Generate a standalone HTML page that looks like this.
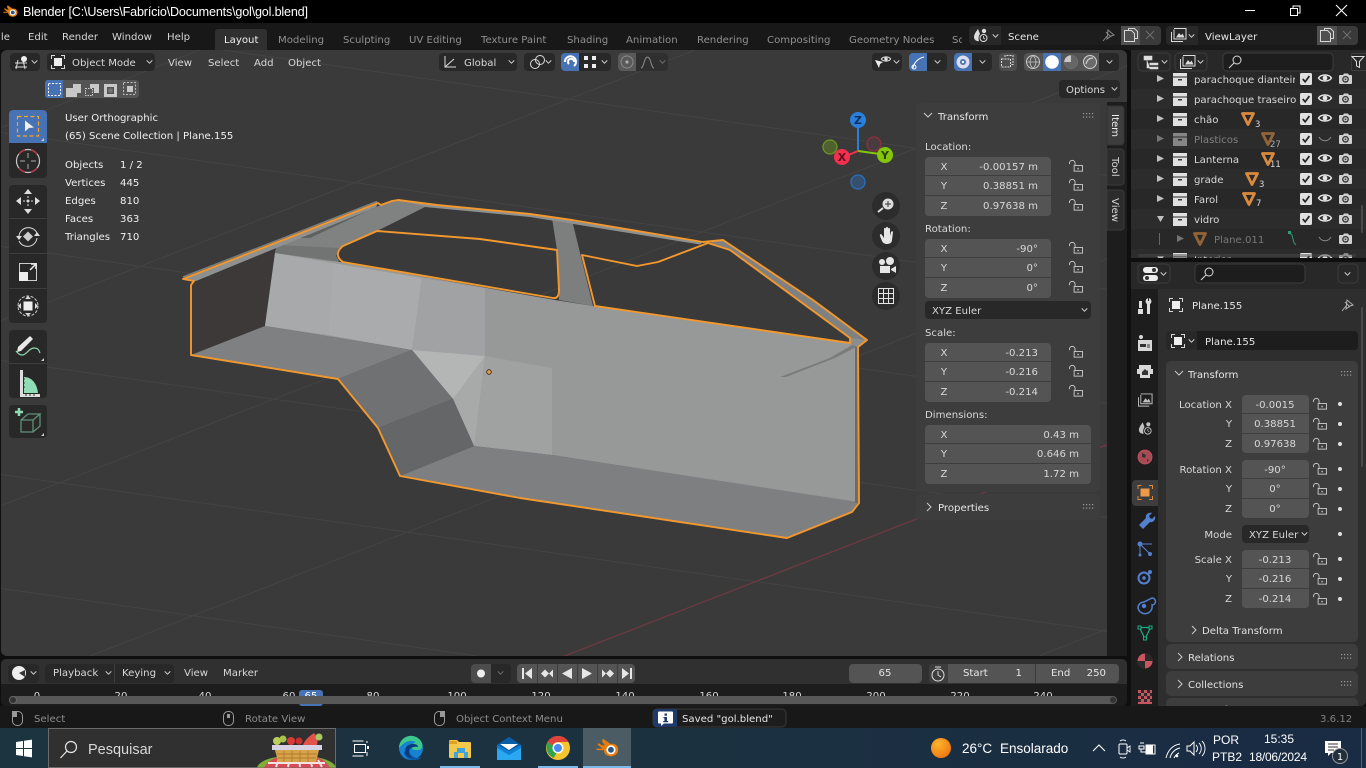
<!DOCTYPE html>
<html><head><meta charset="utf-8"><title>Blender</title>
<style>
html,body{margin:0;padding:0;background:#000;width:1366px;height:768px;overflow:hidden}
svg{display:block;overflow:hidden}
text{font-family:"DejaVu Sans","Liberation Sans",sans-serif;font-size:10.15px;fill:#d8d8d8;white-space:pre}
.w text,text.w{font-family:"Liberation Sans",sans-serif}
.r{text-anchor:end}.c{text-anchor:middle}
.dim{fill:#9a9a9a}.fld{fill:#545454}.drk{fill:#282828}
</style></head><body>
<svg width="1366" height="768" viewBox="0 0 1366 768" xmlns="http://www.w3.org/2000/svg">
<defs>
<symbol id="lock" viewBox="0 0 15 12" overflow="visible"><g fill="none" stroke="#c8c8c8" stroke-width="1"><rect x="5.5" y="5.5" width="9" height="6"/><path d="M.5 4V3a3 3 0 0 1 6 0v2.500"/></g><rect x="9" y="8" width="1.5" height="1.5" fill="#c8c8c8"/></symbol>
<symbol id="chev" viewBox="0 0 8 5" overflow="visible"><path d="M.5.5L4 4 7.5.5" fill="none" stroke="#d0d0d0" stroke-width="1.2"/></symbol>
<symbol id="eye" viewBox="0 0 14 10" overflow="visible"><path d="M.5 5C3 1 11 1 13.5 5 11 9 3 9 .5 5Z" fill="none" stroke="#e4e4e4" stroke-width="1.5"/><circle cx="7" cy="5" r="2.4" fill="#e4e4e4"/></symbol>
<symbol id="cam" viewBox="0 0 13 12" overflow="visible"><path d="M1 2h3l1-1.5h4L10 2h2a1 1 0 0 1 1 1v7a1 1 0 0 1-1 1H1a1 1 0 0 1-1-1V3a1 1 0 0 1 1-1Z" fill="#d0d0d0"/><circle cx="6.5" cy="6.3" r="3.4" fill="#3c3c3c"/><circle cx="6.5" cy="6.3" r="2" fill="#c8c8c8"/><circle cx="6.5" cy="6.3" r=".9" fill="#444"/></symbol>
<symbol id="chk" viewBox="0 0 11 11" overflow="visible"><rect width="11" height="11" rx="1.5" fill="#e0e0e0"/><path d="M2.5 5.5L4.7 8 8.6 2.8" fill="none" stroke="#282828" stroke-width="1.6"/></symbol>
<symbol id="col" viewBox="0 0 14 13" overflow="visible"><rect width="14" height="3.5" fill="#e0e0e0"/><rect y="4.5" width="14" height="8.5" fill="#e0e0e0"/><rect x="5" y="6" width="4" height="1.5" fill="#333"/></symbol>
<symbol id="tri" viewBox="0 0 7 7" overflow="visible"><path d="M0 0L7 3.5 0 7Z" fill="#c0c0c0"/></symbol>
<symbol id="ot" viewBox="0 0 14 14" overflow="visible"><path d="M1.5 1.5H12.5L7 12.5Z" fill="none" stroke="#d98a3f" stroke-width="2.8" stroke-linejoin="round"/></symbol>
<symbol id="objic" viewBox="0 0 14 14" overflow="visible"><g fill="none" stroke="#d8d8d8" stroke-width="1"><path d="M.5 4V.5H4M10 .5H13.5V4M13.5 10V13.5H10M4 13.5H.5V10"/></g><rect x="3" y="3" width="8" height="8" fill="#eee"/></symbol>
<symbol id="dots" viewBox="0 0 11 6" overflow="visible"><g fill="#9a9a9a"><rect width="1.2" height="1.2"/><rect x="3" width="1.2" height="1.2"/><rect x="6" width="1.2" height="1.2"/><rect x="9" width="1.2" height="1.2"/><rect y="3.5" width="1.2" height="1.2"/><rect x="3" y="3.5" width="1.2" height="1.2"/><rect x="6" y="3.5" width="1.2" height="1.2"/><rect x="9" y="3.5" width="1.2" height="1.2"/></g></symbol>
<symbol id="mouse" viewBox="0 0 11 15" overflow="visible"><rect x=".5" y=".5" width="10" height="14" rx="4.5" fill="none" stroke="#9a9a9a"/></symbol>
<symbol id="copy" viewBox="0 0 14 14" overflow="visible"><path d="M4.5 2.5V.5h6l3 3v7h-3M.5 2.5h7l3 3v8H.5Z" fill="none" stroke="#d8d8d8"/></symbol>
<symbol id="vl" viewBox="0 0 16 14" overflow="visible"><path d="M.5 4v9.5H12M3 1.5v9.5h12V.5H3" fill="none" stroke="#ddd"/><path d="M5 9.5L8 5l2 2.5 1.5-2 2 4Z" fill="#ddd"/></symbol>
<symbol id="scn" viewBox="0 0 16 14" overflow="visible"><path d="M5 1C2 5 1 7 1 9a4 4 0 0 0 5 4C5 10 6 7 7 6Z" fill="#ddd"/><circle cx="11" cy="3" r="2.2" fill="#ddd"/><circle cx="10.5" cy="10" r="3.5" fill="none" stroke="#ddd"/><path d="M10.5 8v2l1.5 1" fill="none" stroke="#ddd" stroke-width=".8"/></symbol>
<symbol id="blogo" viewBox="0 0 30 24" overflow="visible"><path d="M10 1l9 6.5c5-1.500 10 2 10 7.500 0 5-4.500 8.500-9.500 8.500S10 20 10.500 15.500L1 15.500c-1-.8-.8-2 .5-2h7l-6-5c-1-1.200.5-2.500 1.800-1.500l3.500 2.300 3.700-.3-3-3.800C7.500 2.500 8.500.500 10 1Z" fill="#e87d0d"/><circle cx="19.500" cy="15" r="6" fill="#fff"/><circle cx="19.500" cy="15" r="3.800" fill="#265787"/></symbol>
<clipPath id="vpc"><rect x="1" y="50" width="1126" height="606" rx="6"/></clipPath>
<clipPath id="olc"><rect x="1131" y="72" width="235" height="186"/></clipPath>
<clipPath id="tab"><rect x="0" y="26" width="962" height="24"/></clipPath>
<clipPath id="rulc"><rect x="0" y="684" width="1127" height="22"/></clipPath>
<clipPath id="prc"><rect x="1131" y="262" width="235" height="444"/></clipPath>
<clipPath id="olnm"><rect x="1131" y="72" width="164" height="186"/></clipPath>
<linearGradient id="tb" x1="0" x2="1" y1="0" y2="0"><stop offset="0" stop-color="#1c3340"/><stop offset=".5" stop-color="#1b3140"/><stop offset="1" stop-color="#1a2b44"/></linearGradient>
<radialGradient id="sun" cx=".35" cy=".3" r=".9"><stop offset="0" stop-color="#fbb52c"/><stop offset="1" stop-color="#ec6a0c"/></radialGradient>
</defs>

<rect width="1366" height="768" fill="#0f0f0f"/>
<!-- title bar -->
<rect width="1366" height="23" fill="#000"/>
<use href="#blogo" x="3" y="5" width="15" height="12"/>
<text class="w" x="23" y="16" style="font-size:12.6px;fill:#fff" textLength="285">Blender [C:\Users\Fabrício\Documents\gol\gol.blend]</text>
<path d="M1245 10.500h10" stroke="#fff"/>
<path d="M1290.500 8.500h7v7h-7ZM1293 8.500V6h7v7h-2.500" fill="none" stroke="#fff"/>
<path d="M1336 5l11 11M1347 5l-11 11" stroke="#fff" stroke-width="1.100"/>

<!-- top bar -->
<rect y="23" width="1366" height="27" fill="#181818"/>
<g style="fill:#d0d0d0">
<text x="-7" y="40">File</text><text x="28" y="40">Edit</text><text x="62" y="40">Render</text><text x="112" y="40">Window</text><text x="167" y="40">Help</text>
</g>
<path d="M215 50V32a3 3 0 0 1 3-3h46a3 3 0 0 1 3 3v18Z" fill="#303030"/>
<g clip-path="url(#tab)">
<text x="224" y="43" fill="#fff" style="fill:#f0f0f0">Layout</text>
<g style="opacity:.62"><text x="278" y="43">Modeling</text><text x="343" y="43">Sculpting</text><text x="409" y="43">UV Editing</text><text x="481" y="43">Texture Paint</text><text x="567" y="43">Shading</text><text x="626" y="43">Animation</text><text x="697" y="43">Rendering</text><text x="767" y="43">Compositing</text><text x="849" y="43">Geometry Nodes</text><text x="952" y="43">Scripting</text></g>
</g>
<!-- scene -->
<rect x="969" y="26" width="192" height="19" rx="4" fill="#282828"/>
<rect x="1001" y="26" width="120" height="19" fill="#1d1d1d"/>
<path d="M1121 26h19v19h-19Z" fill="#505050"/><path d="M1140 26h17a4 4 0 0 1 4 4v11a4 4 0 0 1-4 4h-17Z" fill="#3a3a3a"/>
<use href="#scn" x="973" y="28" width="16" height="14"/><use href="#chev" x="992" y="34" width="7" height="4"/>
<text x="1008" y="40" style="fill:#e6e6e6">Scene</text>
<path d="M1103 41l4-5m-1-4l5 5m-3-7l6 5-3 1-4 3Z" fill="none" stroke="#888"/>
<use href="#copy" x="1124" y="28" width="14" height="14"/><path d="M1146 31l8 8m0-8l-8 8" stroke="#6f6f6f"/>
<rect x="1166" y="26" width="192" height="19" rx="4" fill="#282828"/>
<rect x="1198" y="26" width="119" height="19" fill="#1d1d1d"/>
<path d="M1317 26h20v19h-20Z" fill="#505050"/><path d="M1337 26h17a4 4 0 0 1 4 4v11a4 4 0 0 1-4 4h-17Z" fill="#3a3a3a"/>
<use href="#vl" x="1171" y="28" width="16" height="14"/><use href="#chev" x="1188" y="34" width="7" height="4"/>
<text x="1205" y="40" style="fill:#e6e6e6">ViewLayer</text>
<use href="#copy" x="1320" y="28" width="14" height="14"/><path d="M1343 31l8 8m0-8l-8 8" stroke="#6f6f6f"/>

<!-- viewport -->
<g clip-path="url(#vpc)">
<rect x="1" y="50" width="1126" height="606" fill="#3a3a3a"/>
<g stroke="#444" stroke-width="1" fill="none">
<path d="M223 50L1127 178.300M0 132.300L1127 292.300M0 246.300L1127 406.300M0 360.300L1127 520.300M0 474.300L1127 634.300M0 588.300L477 656"/>
<path d="M0 128L200 50M0 321L695 50M0 506L1127 66M90 656L1127 251M1039 656L1127 621"/>
</g>
<path d="M562 657L1127 437" stroke="#6c3a42" fill="none" stroke-width="1.300"/>

<!-- mesh faces -->
<path d="M191 285L275 248 265 326 191 355Z" fill="#3d3938"/>
<path d="M552 218L572 220 593 306 559 300 559 293 557 250Z" fill="#7d7f7f"/>
<path d="M381 205L398 200 425 207 377 231 340 248 336 256 339 261 275 252 277 245 300 236Z" fill="#808282"/>
<path d="M277 245L340 248 336 256 339 262 275 253Z" fill="#727474"/>
<path d="M300 238L372 209 378 206 310 238Z" fill="#5f6161"/>
<path d="M183 277L377 201.500" stroke="#7c7e7e" stroke-width="1.500" fill="none"/>
<path d="M183 279L378 203 376 207 196 281Z" fill="#8f9090"/>
<path d="M398 200L437 205 530 214 703 242 700 244.500 530 217 425 207Z" fill="#8e9090"/>
<path d="M708 243L723 240 813 300 867 340 858 347 850 338 730 250Z" fill="#7f8181"/>
<path d="M275 253L340 262 555 300 593 306 850 343 858 347 858 503 552 455 474 446 453 399 412 350 265 326Z" fill="#979998"/>
<path d="M275 253L333 263 328 335 265 326Z" fill="#a7a9aa"/>
<path d="M333 263L422 278 412 350 328 335Z" fill="#a9abac"/>
<path d="M422 278L485 288 485 356 412 350Z" fill="#a0a2a3"/>
<path d="M485 356L552 368 552 455 474 446 477 423Z" fill="#a0a2a2"/>
<path d="M485 356L453 399 474 446 477 423Z" fill="#a8aaaa"/>
<path d="M412 350L485 356 453 399Z" fill="#b4b6b6"/>
<path d="M191 355L265 326 412 350 338 379Z" fill="#7f8081"/>
<path d="M338 379L412 350 453 399 378 428Z" fill="#707173"/>
<path d="M378 428L453 399 474 446 400 476Z" fill="#656668"/>
<path d="M400 476L474 446 552 455 858 502 852 512 787 538 520 498Z" fill="#7e7f81"/>
<path d="M780 377L830 358 852 345 858 346 835 358 786 377Z" fill="#7a7c7c"/>
<path d="M855 347H858V503H855Z" fill="#6a6c6c"/>
<path d="M850 338L867 340 858 347 850 344Z" fill="#8c8e8e"/>
<!-- outlines -->
<g fill="none" stroke="#f2982e" stroke-width="1.900" stroke-linejoin="round">
<path d="M183 279L378 203 381 205 392 201 398 200 437 205 530 214 572 220 703 242 723 240 813 300 867 340 858 347 859 503 852 512 787 538 520 498 400 476 378 428 338 379 191 355 191 285 194 281Z"/>
<path d="M377 231L480 239 557 250 559 290Q559 299 553 298L343 262Q337 258 338 253 339 249 343 246Z"/>
<path d="M582 255L637 266 658 262 708 243 730 250 850 338 850 343 595 306Z"/>
</g>
<circle cx="489" cy="372" r="2.300" fill="#f0993a" stroke="#222" stroke-width=".8"/>
</g>

<!-- header -->
<rect x="10" y="53" width="30" height="18" rx="4" fill="#282828"/>
<g fill="none" stroke="#ddd"><path d="M15 63h12M15 67h12M18 60l-2 9M23 60l2 9"/></g><circle cx="24" cy="59" r="3" fill="#eee"/>
<use href="#chev" x="31" y="60" width="7" height="4"/>
<rect x="47" y="53" width="108" height="18" rx="4" fill="#282828"/>
<use href="#objic" x="51" y="55" width="14" height="14"/>
<text x="72" y="66">Object Mode</text><use href="#chev" x="146" y="60" width="7" height="4"/>
<text x="168" y="66">View</text><text x="208" y="66">Select</text><text x="254" y="66">Add</text><text x="288" y="66">Object</text>
<rect x="439" y="53" width="78" height="18" rx="4" fill="#282828"/>
<path d="M445 56v11h11M445 67l9-8" fill="none" stroke="#ddd"/>
<text x="464" y="66">Global</text><use href="#chev" x="508" y="60" width="7" height="4"/>
<rect x="524" y="53" width="31" height="18" rx="4" fill="#282828"/>
<circle cx="535" cy="64" r="4.500" fill="none" stroke="#ddd"/><circle cx="540" cy="60" r="4.500" fill="none" stroke="#ddd"/>
<use href="#chev" x="545" y="60" width="7" height="4"/>
<rect x="561" y="53" width="50" height="18" rx="4" fill="#282828"/>
<path d="M565 53h14v18h-14a4 4 0 0 1-4-4V57a4 4 0 0 1 4-4Z" fill="#4772b3"/>
<path d="M565 62a5.500 5.500 0 1 1 9 4M574 62a3 3 0 1 0-5 2" fill="none" stroke="#fff" stroke-width="2"/>
<g fill="#eee"><rect x="584" y="56" width="4" height="4"/><rect x="592" y="56" width="4" height="4"/><rect x="584" y="64" width="4" height="4"/><rect x="592" y="64" width="4" height="4"/></g>
<use href="#chev" x="601" y="60" width="7" height="4"/>
<rect x="618" y="53" width="50" height="18" rx="4" fill="#2f2f2f"/>
<path d="M622 53h14v18h-14a4 4 0 0 1-4-4V57a4 4 0 0 1 4-4Z" fill="#595959"/>
<circle cx="627" cy="62" r="6" fill="none" stroke="#8a8a8a"/><circle cx="627" cy="62" r="1.600" fill="#aaa"/>
<path d="M641 68c3 0 3-11 6.500-11s3.500 11 6.500 11" fill="none" stroke="#8a8a8a"/>
<use href="#chev" x="659" y="60" width="7" height="4" opacity=".4"/>
<rect x="872" y="53" width="30" height="18" rx="4" fill="#282828"/>
<use href="#eye" x="881" y="55" width="10" height="8"/><path d="M875 60l8 2-3 2-1 4Z" fill="#eee"/><use href="#chev" x="893" y="60" width="7" height="4"/>
<rect x="909" y="53" width="38" height="18" rx="4" fill="#282828"/>
<path d="M913 53h14v18h-14a4 4 0 0 1-4-4V57a4 4 0 0 1 4-4Z" fill="#4772b3"/>
<path d="M913 68c1-6 6-10 11-11" fill="none" stroke="#fff"/><circle cx="914" cy="67" r="2" fill="none" stroke="#fff"/>
<use href="#chev" x="934" y="60" width="7" height="4"/>
<rect x="954" y="53" width="38" height="18" rx="4" fill="#282828"/>
<path d="M958 53h14v18h-14a4 4 0 0 1-4-4V57a4 4 0 0 1 4-4Z" fill="#4772b3"/>
<circle cx="963" cy="62" r="6.500" fill="#dde" /><circle cx="963" cy="62" r="3" fill="#4772b3"/><circle cx="963" cy="62" r="1.200" fill="#fff"/>
<use href="#chev" x="979" y="60" width="7" height="4"/>
<rect x="999" y="53" width="18" height="18" rx="4" fill="#4d4d4d"/>
<path d="M1005 57v-1.500h8v9h-2M1001.500 59h9v8h-9Z" fill="none" stroke="#ddd" stroke-dasharray="2 1"/>
<rect x="1024" y="53" width="95" height="18" rx="4" fill="#282828"/>
<path d="M1028 53h71v18h-71a4 4 0 0 1-4-4V57a4 4 0 0 1 4-4Z" fill="#545454"/>
<rect x="1043" y="53" width="18" height="18" fill="#4772b3"/>
<circle cx="1033" cy="62" r="6.500" fill="none" stroke="#c8c8c8"/><path d="M1026.500 62h13M1033 55.500c-4 4-4 9 0 13M1033 55.500c4 4 4 9 0 13" fill="none" stroke="#c8c8c8" stroke-width=".8"/>
<circle cx="1052" cy="62" r="6.800" fill="#fff"/>
<circle cx="1071" cy="62" r="6.800" fill="#c8c8c8"/><path d="M1071 62V55.200a6.800 6.800 0 0 1 0 13.600 6.800 6.800 0 0 1-6.800-6.800Z" fill="#666"/>
<circle cx="1090" cy="62" r="6.500" fill="#6a6a6a" stroke="#d0d0d0"/><path d="M1086 64c1-4 3-6 7-6" stroke="#ddd" fill="none"/>
<use href="#chev" x="1106" y="60" width="7" height="4"/>
<rect x="1059" y="80" width="61" height="18" rx="4" fill="#282828"/>
<text x="1066" y="93">Options</text><use href="#chev" x="1111" y="87" width="7" height="4"/>
<!-- select mode -->
<rect x="45" y="80" width="94" height="18" rx="3" fill="#545454"/>
<path d="M48 80h15v18H48a3 3 0 0 1-3-3V83a3 3 0 0 1 3-3Z" fill="#4772b3"/>
<rect x="48.500" y="83.500" width="12" height="12" fill="none" stroke="#fff" stroke-dasharray="2 1.500"/>
<path d="M66 88h7v-4h8v9h-4v4h-11Z" fill="#c8c8c8"/>
<rect x="85.500" y="88.500" width="7" height="7" fill="none" stroke="#ccc" stroke-dasharray="1.500 1"/><path d="M90 84h9v9h-5v-5h-4Z" fill="#c8c8c8"/>
<path d="M104 84h13v13h-13ZM107 87v7h7v-7Z" fill="#c8c8c8" fill-rule="evenodd"/><rect x="108.500" y="88.500" width="4" height="4" fill="#777"/>
<rect x="123.500" y="82.500" width="12" height="12" fill="none" stroke="#bbb" stroke-dasharray="2 1.500"/><rect x="127" y="86" width="6" height="6" fill="#c8c8c8"/>

<!-- toolbar -->
<rect x="9" y="110" width="38" height="68" rx="4" fill="#282828"/>
<path d="M13 110h30a4 4 0 0 1 4 4v29H9v-29a4 4 0 0 1 4-4Z" fill="#4772b3"/>
<rect x="17.500" y="116.500" width="21" height="19.500" fill="none" stroke="#f5a623" stroke-width="1.200" stroke-dasharray="4 2.500"/>
<path d="M25 120.500l9 7-5 .5-4 3.500Z" fill="#eee"/><path d="M41 141l3-3v3Z" fill="#ccc"/>
<circle cx="28" cy="161" r="11.500" fill="none" stroke="#c8c8c8" stroke-width="1.200"/><path d="M19 154a11.500 11.500 0 0 1 6-4M37 168a11.500 11.500 0 0 1-6 4M19 168a11.500 11.500 0 0 0 6 4M37 154a11.500 11.500 0 0 0-6-4" fill="none" stroke="#b33a48" stroke-width="1.500"/>
<path d="M28 153v5M28 164v5M20 161h5M31 161h5" stroke="#aaa"/>
<rect x="9" y="185" width="38" height="138" rx="4" fill="#282828"/>
<path d="M9 218.500h38M9 253.500h38M9 288.500h38" stroke="#3d3d3d"/>
<rect x="9" y="330" width="38" height="68" rx="4" fill="#282828"/><path d="M9 363.500h38" stroke="#3d3d3d"/>
<rect x="9" y="405" width="38" height="33" rx="4" fill="#282828"/>
<g fill="#ddd"><path d="M28 189l4 5h-8ZM28 214l4-5h-8ZM16 201l5-4v8ZM40 201l-5-4v8Z"/><circle cx="28" cy="201" r="1.500"/></g><path d="M28 196v2M28 204v2M23 201h2M31 201h2" stroke="#ddd"/>
<path d="M19 236a9.500 9.500 0 0 1 18-3M37 238a9.500 9.500 0 0 1-18 3" fill="none" stroke="#ddd"/><path d="M28 231.500l5 5-5 5-5-5Z" fill="#ccc"/><path d="M16 236h6l-3 4ZM34 236h6l-3-4Z" fill="#ddd"/>
<rect x="19.500" y="263.500" width="17" height="17" fill="none" stroke="#ccc"/><rect x="19" y="272" width="9" height="9" fill="#eee"/><path d="M30 270l5-5M31 264h5v5" fill="none" stroke="#eee" stroke-width="1.500"/>
<rect x="23.500" y="301.500" width="9" height="9" fill="#eee"/><circle cx="28" cy="306" r="10" fill="none" stroke="#ccc" stroke-dasharray="3 1.500"/><path d="M28 296l3 3h-6ZM28 316l3-3h-6ZM18 306l3-3v6ZM38 306l-3-3v6Z" fill="#ddd"/>
<path d="M18 347L30 336 33 339 21 351 17 352Z" fill="#e8e8e8"/><path d="M16 351c3 4 6 5 9 3s5-6 9-6 5 2 6 5" fill="none" stroke="#8fd6ae" stroke-width="1.200"/><path d="M41 361l3-3v3Z" fill="#ccc"/>
<path d="M20 370h3v26h-3ZM20 394h20v3H20Z" fill="#ddd"/><path d="M24 377c8 0 13 7 14 16H24Z" fill="#90dcb4"/><path d="M23 375h2M23 379h2M23 383h2M23 387h2M26 394v2M30 394v2M34 394v2" stroke="#333"/>
<path d="M15 412h8M19 408v8" stroke="#8fdcb4" stroke-width="2.500"/><path d="M21 420h12v12H21ZM21 420l7-6h12l-7 6M40 414v12l-7 6" fill="none" stroke="#5e9078" stroke-width="1.300"/><path d="M41 436l3-3v3Z" fill="#ccc"/>

<!-- overlay text -->
<g style="fill:#f0f0f0">
<text x="65" y="121" style="fill:#f0f0f0">User Orthographic</text>
<text x="65" y="139" style="fill:#f0f0f0">(65) Scene Collection | Plane.155</text>
<text x="65" y="168" style="fill:#f0f0f0">Objects</text><text x="120" y="168" style="fill:#f0f0f0">1 / 2</text>
<text x="65" y="186" style="fill:#f0f0f0">Vertices</text><text x="120" y="186" style="fill:#f0f0f0">445</text>
<text x="65" y="204" style="fill:#f0f0f0">Edges</text><text x="120" y="204" style="fill:#f0f0f0">810</text>
<text x="65" y="222" style="fill:#f0f0f0">Faces</text><text x="120" y="222" style="fill:#f0f0f0">363</text>
<text x="65" y="240" style="fill:#f0f0f0">Triangles</text><text x="120" y="240" style="fill:#f0f0f0">710</text>
</g>

<!-- gizmo -->
<circle cx="874" cy="144" r="7" fill="#4a3b3f" stroke="#8f3040" stroke-width="1.300"/>
<circle cx="830" cy="147" r="7" fill="#50602f" stroke="#6b9620" stroke-width="1.300"/>
<circle cx="858" cy="182" r="7" fill="#34506e" stroke="#2a70c0" stroke-width="1.300"/>
<path d="M858 127v24" stroke="#2a7fde" stroke-width="2"/><path d="M858 151l22 3" stroke="#83c60a" stroke-width="2"/><path d="M858 151l-12 5" stroke="#f4304e" stroke-width="2"/>
<circle cx="858" cy="120" r="8" fill="#2a7fde"/><circle cx="885" cy="155" r="8" fill="#83c60a"/><circle cx="842" cy="157" r="8" fill="#f4304e"/>
<g style="font-weight:bold"><text class="c" x="858" y="124" style="fill:#10305a;font-size:11px;font-weight:bold">Z</text><text class="c" x="885" y="159" style="fill:#2a4004;font-size:11px;font-weight:bold">Y</text><text class="c" x="842" y="161" style="fill:#5a1020;font-size:11px;font-weight:bold">X</text></g>
<g fill="#2c2c2c"><circle cx="886" cy="206" r="14"/><circle cx="886" cy="236" r="14"/><circle cx="886" cy="266" r="14"/><circle cx="886" cy="296" r="14"/></g>
<circle cx="888" cy="204" r="5.500" fill="#ddd"/><path d="M885 204h6M888 201v6" stroke="#333"/><path d="M883 208l-5 4" stroke="#ddd" stroke-width="2"/>
<path d="M880 236l2 5c1 2 3 3 5 3s5-1 5-4l1-8c0-1-1.500-1-2 0l-1 4v-7c0-1.500-2-1.500-2 0v6-7c0-1.500-2-1.500-2 0v7-6c0-1.500-2-1.500-2 0v9l-2-3c-1-1.500-2.500-1-2 1Z" fill="#e6e6e6"/>
<circle cx="882" cy="262" r="3" fill="#e6e6e6"/><circle cx="890" cy="261" r="4" fill="#e6e6e6"/><rect x="880" y="266" width="10" height="7" fill="#e6e6e6"/><path d="M891 269l5-3v7l-5-3Z" fill="#e6e6e6"/>
<path d="M878.500 288.500h15v15h-15ZM883.500 288.500v15M888.500 288.500v15M878.500 293.500h15M878.500 298.500h15" fill="none" stroke="#e6e6e6"/>

<!-- sidebar -->
<path d="M1107 102h20v554h-20Z" fill="#1d1d1d"/>
<rect x="916" y="103" width="184" height="389" rx="5" fill="#3d3d3d"/>
<rect x="916" y="494" width="184" height="26" rx="5" fill="#3d3d3d"/>
<path d="M924 113l4 4 4-4" fill="none" stroke="#ccc"/><text x="938" y="120" style="fill:#e6e6e6">Transform</text><use href="#dots" x="1083" y="113" width="11" height="6"/>
<path d="M927 503l4 4-4 4" fill="none" stroke="#ccc"/><text x="938" y="511" style="fill:#e6e6e6">Properties</text><use href="#dots" x="1083" y="504" width="11" height="6"/>
<g fill="#3d3d3d" stroke="#333"><path d="M1107 106h14a3 3 0 0 1 3 3v33a3 3 0 0 1-3 3h-14Z"/></g>
<g fill="#2c2c2c" stroke="#3a3a3a"><path d="M1107 149h14a3 3 0 0 1 3 3v30a3 3 0 0 1-3 3h-14Z"/><path d="M1107 190h14a3 3 0 0 1 3 3v34a3 3 0 0 1-3 3h-14Z"/></g>
<text transform="translate(1112,114) rotate(90)" style="fill:#eee">Item</text>
<text transform="translate(1112,157) rotate(90)">Tool</text>
<text transform="translate(1112,198) rotate(90)">View</text>
<g style="fill:#d0d0d0">
<text x="925" y="150">Location:</text><text x="925" y="232">Rotation:</text><text x="925" y="336">Scale:</text><text x="925" y="418">Dimensions:</text>
</g>
<g class="fld">
<rect x="925" y="157" width="126" height="59" rx="4"/><rect x="925" y="239" width="126" height="59" rx="4"/><rect x="925" y="343" width="126" height="59" rx="4"/><rect x="925" y="425" width="166" height="59" rx="4"/>
</g>
<path d="M925 175.500h126M925 195.500h126M925 257.500h126M925 277.500h126M925 361.500h126M925 381.500h126M925 443.500h166M925 463.500h166" stroke="#3d3d3d"/>
<g style="fill:#e0e0e0">
<text class="c" x="944" y="170">X</text><text class="c" x="944" y="189">Y</text><text class="c" x="944" y="209">Z</text>
<text class="c" x="944" y="252">X</text><text class="c" x="944" y="271">Y</text><text class="c" x="944" y="291">Z</text>
<text class="c" x="944" y="356">X</text><text class="c" x="944" y="375">Y</text><text class="c" x="944" y="395">Z</text>
<text class="c" x="944" y="438">X</text><text class="c" x="944" y="457">Y</text><text class="c" x="944" y="477">Z</text>
<text class="r" x="1038" y="170">-0.00157 m</text><text class="r" x="1038" y="189">0.38851 m</text><text class="r" x="1038" y="209">0.97638 m</text>
<text class="r" x="1038" y="252">-90°</text><text class="r" x="1038" y="271">0°</text><text class="r" x="1038" y="291">0°</text>
<text class="r" x="1038" y="356">-0.213</text><text class="r" x="1038" y="375">-0.216</text><text class="r" x="1038" y="395">-0.214</text>
<text class="r" x="1079" y="438">0.43 m</text><text class="r" x="1079" y="457">0.646 m</text><text class="r" x="1079" y="477">1.72 m</text>
</g>
<rect x="925" y="301" width="166" height="18" rx="4" fill="#282828"/><text x="932" y="314">XYZ Euler</text><use href="#chev" x="1081" y="308" width="7" height="4"/>
<g>
<use href="#lock" x="1069" y="160" width="14" height="12"/><use href="#lock" x="1069" y="179" width="14" height="12"/><use href="#lock" x="1069" y="199" width="14" height="12"/>
<use href="#lock" x="1069" y="242" width="14" height="12"/><use href="#lock" x="1069" y="261" width="14" height="12"/><use href="#lock" x="1069" y="281" width="14" height="12"/>
<use href="#lock" x="1069" y="346" width="14" height="12"/><use href="#lock" x="1069" y="365" width="14" height="12"/><use href="#lock" x="1069" y="385" width="14" height="12"/>
</g>

<!-- timeline -->
<rect x="1" y="659" width="1126" height="47" rx="5" fill="#1d1d1d"/>
<path d="M1 684v-20a5 5 0 0 1 5-5h1116a5 5 0 0 1 5 5v20Z" fill="#303030"/>
<rect x="8" y="664" width="31" height="19" rx="4" fill="#282828"/>
<circle cx="19" cy="673" r="7" fill="#eee"/><path d="M19 673l6-3v7Z" fill="#333"/><use href="#chev" x="30" y="671" width="7" height="4"/>
<rect x="45" y="664" width="129" height="19" rx="4" fill="#282828"/><path d="M114.500 664v19" stroke="#3d3d3d"/>
<text x="53" y="676">Playback</text><use href="#chev" x="105" y="671" width="7" height="4"/>
<text x="122" y="676">Keying</text><use href="#chev" x="164" y="671" width="7" height="4"/>
<text x="184" y="676">View</text><text x="223" y="676">Marker</text>
<rect x="471" y="664" width="40" height="19" rx="4" fill="#282828"/><path d="M475 664h16v19h-16a4 4 0 0 1-4-4v-11a4 4 0 0 1 4-4Z" fill="#4c4c4c"/>
<circle cx="481" cy="673.500" r="4" fill="#eee"/><use href="#chev" x="497" y="671" width="7" height="4" opacity=".4"/>
<rect x="517" y="664" width="118" height="19" rx="4" fill="#545454"/>
<path d="M537.500 664v19M557.500 664v19M577.500 664v19M597.500 664v19M617.500 664v19" stroke="#3d3d3d"/>
<g fill="#e6e6e6">
<path d="M522 668h2v11h-2ZM532 668v11l-7-5.500Z"/>
<path d="M541 673.500l4-4 4 4-4 4ZM549 673.500l4-4v8Z"/>
<path d="M572 668v11l-10-5.500Z"/><path d="M582 668v11l10-5.500Z"/>
<path d="M602 669.500l4 4-4 4ZM606 673.500l4-4 4 4-4 4Z"/>
<path d="M630 668h2v11h-2ZM622 668v11l7-5.500Z"/>
</g>
<rect x="849" y="664" width="73" height="19" rx="4" fill="#545454"/><text class="c" x="885" y="676" style="fill:#e6e6e6">65</text>
<rect x="929" y="664" width="190" height="19" rx="4" fill="#545454"/><path d="M933 664h15v19h-15a4 4 0 0 1-4-4v-11a4 4 0 0 1 4-4Z" fill="#3d3d3d"/>
<path d="M1035.500 664v19" stroke="#3d3d3d"/>
<circle cx="938" cy="675" r="6" fill="none" stroke="#ddd"/><path d="M938 671v4l3 2M935 667h6" fill="none" stroke="#ddd"/>
<text x="963" y="676" style="fill:#e6e6e6">Start</text><text class="r" x="1022" y="676" style="fill:#e6e6e6">1</text>
<text x="1051" y="676" style="fill:#e6e6e6">End</text><text class="r" x="1106" y="676" style="fill:#e6e6e6">250</text>
<g clip-path="url(#rulc)" style="fill:#b8b8b8">
<text class="c" x="37" y="699">0</text><text class="c" x="121" y="699">20</text><text class="c" x="205" y="699">40</text><text class="c" x="289" y="699">60</text><text class="c" x="373" y="699">80</text><text class="c" x="457" y="699">100</text><text class="c" x="541" y="699">120</text><text class="c" x="625" y="699">140</text><text class="c" x="709" y="699">160</text><text class="c" x="792" y="699">180</text><text class="c" x="876" y="699">200</text><text class="c" x="960" y="699">220</text><text class="c" x="1043" y="699">240</text>
</g>
<rect x="299" y="690" width="24" height="16" rx="3" fill="#4772b3"/><text class="c" x="311" y="699" style="fill:#fff">65</text>
<rect x="9" y="696" width="1108" height="8" rx="4" fill="#585858"/>
<circle cx="13" cy="700" r="3.500" fill="#333" stroke="#666"/><circle cx="1113" cy="700" r="3" fill="#333"/>
<rect x="309.500" y="704" width="2" height="3" fill="#4772b3"/>

<!-- status bar -->
<rect y="706" width="1366" height="22" fill="#181818"/>
<use href="#mouse" x="12" y="711" width="11" height="15"/><use href="#mouse" x="223" y="711" width="11" height="15"/><use href="#mouse" x="434" y="711" width="11" height="15"/>
<path d="M12 711h5v6h-5Z" fill="#9a9a9a"/><rect x="227" y="714" width="3" height="4" fill="#9a9a9a"/><path d="M440 711h5v6h-5Z" fill="#9a9a9a"/>
<g style="opacity:.6"><text x="34" y="722">Select</text><text x="245" y="722">Rotate View</text><text x="456" y="722">Object Context Menu</text></g>
<rect x="653" y="709" width="133" height="18" rx="4" fill="#1d1d1d" stroke="#3a3a3a"/>
<path d="M657 709h20v18h-20a4 4 0 0 1-4-4v-10a4 4 0 0 1 4-4Z" fill="#1e3a6b"/>
<path d="M659 711.500h13a1 1 0 0 1 1 1v10a1 1 0 0 1-1 1h-8l-3 2.500v-2.500h-2a1 1 0 0 1-1-1v-10a1 1 0 0 1 1-1Z" fill="#fff"/><rect x="664.500" y="713.500" width="2.500" height="2.200" fill="#1e3a6b"/><path d="M663.500 717h3.500v4h1.200v1.200h-5v-1.200h1.200v-2.800h-.9Z" fill="#1e3a6b"/>
<text x="682" y="722" style="fill:#e6e6e6">Saved "gol.blend"</text>
<text x="1320" y="722" style="fill:#808080">3.6.12</text>

<!-- outliner -->
<rect x="1131" y="50" width="235" height="208" rx="5" fill="#282828"/>
<g fill="#2c2c2c"><rect x="1131" y="89" width="235" height="20"/><rect x="1131" y="129" width="235" height="20"/><rect x="1131" y="169" width="235" height="20"/><rect x="1131" y="209" width="235" height="20"/><rect x="1131" y="249" width="235" height="9"/></g>
<g clip-path="url(#olc)">
<g style="fill:#d8d8d8">
<g clip-path="url(#olnm)"><text x="1194" y="83">parachoque dianteiro</text></g>
<text x="1194" y="103">parachoque traseiro</text>
<text x="1194" y="123">chão</text>
<text x="1194" y="143" style="fill:#808080">Plasticos</text>
<text x="1194" y="163">Lanterna</text>
<text x="1194" y="183">grade</text>
<text x="1194" y="203">Farol</text>
<text x="1194" y="223">vidro</text>
<text x="1214" y="243" style="fill:#787878">Plane.011</text>
<text x="1194" y="263">Interior</text>
</g>
<use href="#tri" x="1157" y="75" width="7" height="7"/><use href="#tri" x="1157" y="95" width="7" height="7"/><use href="#tri" x="1157" y="115" width="7" height="7"/><use href="#tri" x="1157" y="135" width="7" height="7" opacity=".5"/><use href="#tri" x="1157" y="155" width="7" height="7"/><use href="#tri" x="1157" y="175" width="7" height="7"/><use href="#tri" x="1157" y="195" width="7" height="7"/>
<path d="M1157 216h7l-3.500 6ZM1157 256h7l-3.500 6Z" fill="#c0c0c0"/><use href="#tri" x="1177" y="235" width="7" height="7" opacity=".5"/>
<path d="M1159.500 233v12" stroke="#666"/>
<use href="#col" x="1173" y="73" width="14" height="13"/><use href="#col" x="1173" y="93" width="14" height="13"/><use href="#col" x="1173" y="113" width="14" height="13"/><use href="#col" x="1173" y="133" width="14" height="13" opacity=".5"/><use href="#col" x="1173" y="153" width="14" height="13"/><use href="#col" x="1173" y="173" width="14" height="13"/><use href="#col" x="1173" y="193" width="14" height="13"/><use href="#col" x="1173" y="213" width="14" height="13"/><use href="#col" x="1173" y="253" width="14" height="13"/>
<use href="#ot" x="1241" y="112" width="14" height="14"/><use href="#ot" x="1261" y="132" width="14" height="14" opacity=".6"/><use href="#ot" x="1261" y="152" width="14" height="14"/><use href="#ot" x="1245" y="172" width="14" height="14"/><use href="#ot" x="1242" y="192" width="14" height="14"/><use href="#ot" x="1193" y="232" width="14" height="14" opacity=".6"/>
<g style="font-size:8.500px">
<text x="1255" y="127" style="font-size:8.500px">3</text><text x="1270" y="147" style="font-size:8.500px;fill:#aaa">27</text><text x="1270" y="167" style="font-size:8.500px">11</text><text x="1259" y="187" style="font-size:8.500px">3</text><text x="1256" y="206" style="font-size:8.500px">7</text>
</g>
<path d="M1289 233l3 2 2 8M1294 243l2 2" fill="none" stroke="#2f9a7a"/><rect x="1288" y="231" width="3" height="3" fill="#2f9a7a"/>
<use href="#chk" x="1300" y="73" width="12" height="12"/><use href="#chk" x="1300" y="93" width="12" height="12"/><use href="#chk" x="1300" y="113" width="12" height="12"/><use href="#chk" x="1300" y="133" width="12" height="12"/><use href="#chk" x="1300" y="153" width="12" height="12"/><use href="#chk" x="1300" y="173" width="12" height="12"/><use href="#chk" x="1300" y="193" width="12" height="12"/><use href="#chk" x="1300" y="213" width="12" height="12"/><use href="#chk" x="1300" y="253" width="12" height="12"/>
<use href="#eye" x="1318" y="73" width="14" height="10"/><use href="#eye" x="1318" y="93" width="14" height="10"/><use href="#eye" x="1318" y="113" width="14" height="10"/><use href="#eye" x="1318" y="153" width="14" height="10"/><use href="#eye" x="1318" y="173" width="14" height="10"/><use href="#eye" x="1318" y="193" width="14" height="10"/><use href="#eye" x="1318" y="213" width="14" height="10"/><use href="#eye" x="1318" y="253" width="14" height="10"/>
<path d="M1319 137c3 5 9 5 12 0M1319 237c3 5 9 5 12 0" fill="none" stroke="#8a8a8a"/>
<use href="#cam" x="1339" y="73" width="13" height="12"/><use href="#cam" x="1339" y="93" width="13" height="12"/><use href="#cam" x="1339" y="113" width="13" height="12"/><use href="#cam" x="1339" y="133" width="13" height="12"/><use href="#cam" x="1339" y="153" width="13" height="12"/><use href="#cam" x="1339" y="173" width="13" height="12"/><use href="#cam" x="1339" y="193" width="13" height="12"/><use href="#cam" x="1339" y="213" width="13" height="12"/><use href="#cam" x="1339" y="233" width="13" height="12"/><use href="#cam" x="1339" y="253" width="13" height="12"/>
</g>
<rect x="1131" y="50" width="235" height="23" fill="#282828"/>
<rect x="1138" y="53" width="32" height="18" rx="4" fill="#282828" stroke="#3d3d3d"/>
<path d="M1144 56h8v4h-8ZM1150 63h8v2h-8ZM1150 67h8v2h-8ZM1147 60v8h3M1147 64h3" fill="#ddd" stroke="#ddd" stroke-width=".6"/><use href="#chev" x="1161" y="60" width="7" height="4"/>
<rect x="1175" y="53" width="32" height="18" rx="4" fill="#282828" stroke="#3d3d3d"/><use href="#vl" x="1180" y="55" width="16" height="14"/><use href="#chev" x="1197" y="60" width="7" height="4"/>
<rect x="1223" y="53" width="110" height="18" rx="4" fill="#1d1d1d" stroke="#3d3d3d"/><circle cx="1237" cy="60" r="4" fill="none" stroke="#ddd"/><path d="M1234 63l-5 5" stroke="#ddd"/>
<rect x="1351" y="53" width="15" height="18" fill="#282828"/><path d="M1351.500 54v16M1351.500 53.500h15M1351.500 70.500h15" stroke="#3d3d3d" fill="none"/><path d="M1352 56.500h12l-4.500 5v6l-3-1.500v-4.500Z" fill="none" stroke="#ddd"/>
<rect x="1361" y="205" width="2" height="28" rx="1" fill="#4a4a4a"/>
<rect x="1138" y="254" width="218" height="3" rx="1.500" fill="#4a4a4a" opacity=".5"/>

<!-- properties -->
<rect x="1131" y="262" width="235" height="444" rx="5" fill="#2e2e2e"/>
<g clip-path="url(#prc)">
<rect x="1131" y="262" width="235" height="27" fill="#282828"/>
<rect x="1131" y="289" width="27" height="417" fill="#1d1d1d"/>
<rect x="1138" y="264" width="32" height="19" rx="4" fill="#282828" stroke="#3d3d3d"/>
<rect x="1143" y="267" width="15" height="6" rx="3" fill="#eee"/><rect x="1143" y="275" width="15" height="6" rx="3" fill="#eee"/><circle cx="1154" cy="270" r="2" fill="#333"/><circle cx="1147" cy="278" r="2" fill="#333"/><use href="#chev" x="1160" y="272" width="7" height="4"/>
<rect x="1195" y="264" width="110" height="19" rx="4" fill="#1d1d1d" stroke="#3d3d3d"/><circle cx="1209" cy="272" r="4" fill="none" stroke="#ddd"/><path d="M1206 275l-5 5" stroke="#ddd"/>
<rect x="1338" y="264" width="20" height="19" rx="4" fill="#282828" stroke="#3d3d3d"/><use href="#chev" x="1344" y="272" width="7" height="4"/>
<!-- tabs -->
<path d="M1136 480h22v26h-22a4 4 0 0 1-4-4v-18a4 4 0 0 1 4-4Z" fill="#3d3d3d"/>
<g fill="#ddd"><path d="M1139 301h3v7h-3ZM1138 309h5v5h-5ZM1148 298c-3 1-3 5-1 6v10h3v-10c2-1 2-5-1-6v3h-1Z"/></g>
<rect x="1138" y="340" width="14" height="11" fill="#d8d8d8"/><circle cx="1141" cy="337" r="2" fill="#d8d8d8"/><path d="M1147 345h3M1147 347h3" stroke="#333"/><path d="M1140 344h6v3h-6Z" fill="#333"/>
<path d="M1139 365h12v4h2v5h-3v4h-10v-4h-3v-5h2Z" fill="#d8d8d8"/><path d="M1142 372l3-3 2 2 1-1v5h-6Z" fill="#333"/>
<use href="#vl" x="1138" y="393" width="15" height="14" opacity=".85"/>
<use href="#scn" x="1138" y="421" width="15" height="14" opacity=".85"/>
<circle cx="1145" cy="457" r="7" fill="#a84a54" stroke="#c85560" stroke-width=".8"/><path d="M1142 453l4 2-1 3-3-1ZM1147 459l2 1-2 2Z" fill="#333"/>
<path d="M1138 489v-3.500h3.500M1149 485.500h3.500v3.500M1152.500 496v3.500H1149M1141.500 499.500H1138V496" fill="none" stroke="#d98a3f"/>
<rect x="1140.500" y="488.500" width="9" height="8" fill="#ec9a4a"/>
<path d="M1139 525l7-7c-1-3 2-6 6-5l-3 3 1 2 2 1 3-3c1 4-2 7-5 6l-7 7Z" fill="#5480d0"/>
<g fill="#5480d0"><circle cx="1140" cy="544" r="2.500"/><circle cx="1150" cy="554" r="2"/><circle cx="1140" cy="555" r="1.500"/></g><path d="M1140 544l10 10M1140 544v11M1140 544h12" stroke="#5480d0"/>
<circle cx="1144" cy="578" r="5.500" fill="none" stroke="#5480d0" stroke-width="2"/><circle cx="1144" cy="578" r="1.800" fill="#5480d0"/><circle cx="1150" cy="572" r="2" fill="#5480d0"/>
<path d="M1138 608a6 6 0 0 1 6-6l8-4a3 3 0 0 1 0 7 7 7 0 0 1-14 3Z" fill="none" stroke="#5480d0" stroke-width="1.500"/><circle cx="1144" cy="606" r="2.200" fill="#5480d0"/>
<path d="M1139.500 627.500h11L1145 639Z" fill="none" stroke="#1dac82" stroke-width="1.200"/><g fill="#1d1d1d" stroke="#1dac82"><rect x="1138" y="626" width="3" height="3"/><rect x="1149" y="626" width="3" height="3"/><rect x="1143.500" y="637" width="3" height="3"/></g>
<circle cx="1145" cy="661" r="7.500" fill="#c85560"/><path d="M1145 653.500a7.500 7.500 0 0 1 7.500 7.500h-7.500ZM1145 661h-7.500a7.500 7.500 0 0 0 7.500 7.500Z" fill="#2a2a2a"/>
<g fill="#c85560"><rect x="1138" y="690" width="14" height="14"/></g><g fill="#2a2a2a"><rect x="1141" y="690" width="3" height="3"/><rect x="1147" y="690" width="3" height="3"/><rect x="1138" y="693" width="3" height="3"/><rect x="1144" y="693" width="3" height="3"/><rect x="1150" y="693" width="2" height="3"/><rect x="1141" y="696" width="3" height="3"/><rect x="1147" y="696" width="3" height="3"/><rect x="1138" y="699" width="3" height="3"/><rect x="1144" y="699" width="3" height="3"/><rect x="1150" y="699" width="2" height="3"/></g>
<!-- header row -->
<use href="#objic" x="1169" y="298" width="14" height="14"/>
<text x="1192" y="309" style="fill:#e6e6e6">Plane.155</text>
<path d="M1342 311l4-5m-1-4l5 5m-3-7l6 5-3 1-4 3Z" fill="none" stroke="#b0b0b0"/>
<rect x="1166" y="331" width="192" height="19" rx="4" fill="#1d1d1d"/><path d="M1170 331h27v19h-27a4 4 0 0 1-4-4v-11a4 4 0 0 1 4-4Z" fill="#282828"/>
<use href="#objic" x="1171" y="334" width="14" height="14"/><use href="#chev" x="1188" y="339" width="7" height="4"/>
<text x="1205" y="345" style="fill:#e6e6e6">Plane.155</text>
<rect x="1166" y="361" width="192" height="281" rx="5" fill="#3d3d3d"/>
<rect x="1166" y="644" width="192" height="25" rx="5" fill="#3d3d3d"/>
<rect x="1166" y="671" width="192" height="25" rx="5" fill="#3d3d3d"/>
<rect x="1166" y="698" width="192" height="25" rx="5" fill="#3d3d3d"/>
<path d="M1175 371l4 4 4-4" fill="none" stroke="#ccc"/><text x="1188" y="378" style="fill:#e6e6e6">Transform</text><use href="#dots" x="1341" y="371" width="11" height="6"/>
<g class="fld"><rect x="1242" y="395" width="67" height="58" rx="4"/><rect x="1242" y="460" width="67" height="58" rx="4"/><rect x="1242" y="550" width="67" height="58" rx="4"/></g>
<path d="M1242 413.500h67M1242 433.500h67M1242 478.500h67M1242 498.500h67M1242 568.500h67M1242 588.500h67" stroke="#3d3d3d"/>
<rect x="1242" y="525" width="67" height="18" rx="4" fill="#282828"/>
<g style="fill:#e0e0e0">
<text class="r" x="1232" y="408">Location X</text><text class="r" x="1232" y="427">Y</text><text class="r" x="1232" y="447">Z</text>
<text class="r" x="1232" y="473">Rotation X</text><text class="r" x="1232" y="492">Y</text><text class="r" x="1232" y="512">Z</text>
<text class="r" x="1232" y="538">Mode</text>
<text class="r" x="1232" y="563">Scale X</text><text class="r" x="1232" y="582">Y</text><text class="r" x="1232" y="602">Z</text>
<text class="c" x="1275" y="408">-0.0015</text><text class="c" x="1275" y="427">0.38851</text><text class="c" x="1275" y="447">0.97638</text>
<text class="c" x="1275" y="473">-90°</text><text class="c" x="1275" y="492">0°</text><text class="c" x="1275" y="512">0°</text>
<text x="1249" y="538">XYZ Euler</text>
<text class="c" x="1275" y="563">-0.213</text><text class="c" x="1275" y="582">-0.216</text><text class="c" x="1275" y="602">-0.214</text>
</g>
<use href="#chev" x="1301" y="532" width="7" height="4"/>
<g>
<use href="#lock" x="1313" y="398" width="14" height="12"/><use href="#lock" x="1313" y="418" width="14" height="12"/><use href="#lock" x="1313" y="438" width="14" height="12"/>
<use href="#lock" x="1313" y="463" width="14" height="12"/><use href="#lock" x="1313" y="483" width="14" height="12"/><use href="#lock" x="1313" y="503" width="14" height="12"/>
<use href="#lock" x="1313" y="553" width="14" height="12"/><use href="#lock" x="1313" y="573" width="14" height="12"/><use href="#lock" x="1313" y="593" width="14" height="12"/>
</g>
<g fill="#e0e0e0"><circle cx="1340" cy="404" r="2"/><circle cx="1340" cy="424" r="2"/><circle cx="1340" cy="444" r="2"/><circle cx="1340" cy="469" r="2"/><circle cx="1340" cy="489" r="2"/><circle cx="1340" cy="509" r="2"/><circle cx="1340" cy="534" r="2"/><circle cx="1340" cy="559" r="2"/><circle cx="1340" cy="579" r="2"/><circle cx="1340" cy="599" r="2"/></g>
<path d="M1192 626l4 4-4 4" fill="none" stroke="#ccc"/><text x="1202" y="634" style="fill:#e0e0e0">Delta Transform</text>
<path d="M1178 653l4 4-4 4M1178 680l4 4-4 4" fill="none" stroke="#ccc"/>
<text x="1188" y="661" style="fill:#e0e0e0">Relations</text><text x="1188" y="688" style="fill:#e0e0e0">Collections</text>
<use href="#dots" x="1341" y="654" width="11" height="6"/><use href="#dots" x="1341" y="681" width="11" height="6"/>
<text x="1188" y="713">Instancing</text>
<rect x="1361" y="307" width="2" height="160" rx="1" fill="#4a4a4a"/>
</g>

<!-- taskbar -->
<rect y="728" width="1366" height="40" fill="url(#tb)"/>
<g fill="#fff"><path d="M16 742l7-1v7h-7ZM24 740.800l8-1.200v8.400h-8ZM16 749h7v7l-7-1ZM24 749h8v8.400l-8-1.200Z"/></g>
<rect x="48.500" y="728.500" width="287" height="39" fill="#303030" stroke="#6b6b6b"/>
<circle cx="71" cy="747" r="5.500" fill="none" stroke="#e6e6e6" stroke-width="1.200"/><path d="M67 751l-6.500 7" stroke="#e6e6e6" stroke-width="1.200"/>
<text class="w" x="88" y="754" style="font-size:14.500px;fill:#d8d8d8">Pesquisar</text>
<!-- basket -->
<path d="M257 767.500c2-6 12-10 24-11h30c12 1 23 5 25 11Z" fill="#7fae3a"/>
<path d="M264 767.500c3-5 8-9 14-10h38c6 1 11 5 14 10Z" fill="#d84a55"/>
<path d="M276 767l3-8M288 767l2-9M300 767l-1-9M312 767l-2-9M322 767l-4-7M268 763h57" stroke="#f3e4e4" stroke-width="2"/>
<path d="M275 750h44l-3 12h-38Z" fill="#d6a24a"/><path d="M277 754h40M278 758h38M284 751v11M292 751v11M300 751v11M308 751v11" stroke="#b27e2c"/>
<path d="M272 745h50v5h-50Z" fill="#d6d2e4"/>
<circle cx="277" cy="741" r="4" fill="#b9cf5a"/><circle cx="283" cy="739" r="3.500" fill="#a8c24c"/><circle cx="291" cy="741" r="4" fill="#d83a3a"/><circle cx="299" cy="741" r="3.500" fill="#c8302f"/><path d="M303 745c2-6 8-10 11-12 4 4 4 9 3 12Z" fill="#e0524a"/><circle cx="319" cy="737" r="3.500" fill="#a8c860"/>
<!-- task icons -->
<path d="M352.500 741h11M352.500 756h11M354.500 744.500h11v8h-11Z" fill="none" stroke="#fff"/><rect x="367" y="746" width="2" height="3" fill="#fff"/><path d="M367 741v2M367 752v4" stroke="#fff"/>
<circle cx="411" cy="748" r="12" fill="#1782d0"/><path d="M399 748a12 12 0 0 1 23-5c1 3 0 7-4 7-3 0-6 0-6-2 0-4 3-6 4-6-6-3-12 0-17 6Z" fill="#3cc88a"/><path d="M409 749c0 5 4 9 9 9 2 0 3-.5 4-1-2 3-6 3-9 3-5 0-9-4-9-8Z" fill="#0c5aa8"/><path d="M405 752c0-5 3-8 8-8 3 0 5 1 5 3-6-1-9 2-9 5s2 5 5 6c-5 0-9-2-9-6Z" fill="#0a3c7c"/>
<path d="M449 741a1 1 0 0 1 1-1h7l2 2h11a1 1 0 0 1 1 1v14a1 1 0 0 1-1 1h-20a1 1 0 0 1-1-1Z" fill="#f4c84a"/><path d="M449 741h8v3h-8Z" fill="#e0a020"/><path d="M454 752h3v-4h8v4h3v6h-14Z" fill="#3fa3e0"/><rect x="458" y="753" width="6" height="5" fill="#f4c84a"/>
<path d="M497 745l12-8 12 8v15h-24Z" fill="#0f7fd4"/><path d="M497 745l12-8 12 8-12 6Z" fill="#0a5ea8"/><path d="M500 744h18l-9 6Z" fill="#fff"/><path d="M497 748l12 7 12-7v12h-24Z" fill="#2aa8f0"/>
<circle cx="558" cy="748" r="12" fill="#f4c430"/><path d="M558 736a12 12 0 0 1 10.400 6H558a6 6 0 0 0-5.500 3.500L547.600 742A12 12 0 0 1 558 736Z" fill="#e0413a"/><path d="M547.600 742a12 12 0 0 0 6 16l5-8.500a6 6 0 0 1-5.500-4Z" fill="#2fa44f"/><circle cx="558" cy="748" r="5.500" fill="#fff"/><circle cx="558" cy="748" r="4" fill="#4a8af4"/>
<rect x="583" y="728" width="48" height="40" fill="#4c5c65"/>
<use href="#blogo" x="596" y="738" width="23" height="19"/>
<path d="M440 766h40v2h-40ZM538 766h40v2h-40ZM583 766h48v2h-48Z" fill="#7ab9ea"/>
<!-- tray -->
<circle cx="941" cy="748" r="10" fill="url(#sun)"/>
<text class="w" x="962" y="753" style="font-size:13.500px;fill:#fff">26°C</text>
<text class="w" x="1000" y="753" style="font-size:13.500px;fill:#fff">Ensolarado</text>
<path d="M1093 751l6-6 6 6" fill="none" stroke="#fff" stroke-width="1.100"/>
<rect x="1119" y="744" width="8" height="10" rx="1" fill="none" stroke="#fff"/><path d="M1127 748l3-2v6l-3-2M1120 741a5 5 0 0 1 6 0M1120 757a5 5 0 0 0 6 0" fill="none" stroke="#fff" stroke-width=".9"/>
<path d="M1139 746h5v3h-5ZM1141 744v-2M1143 744v-2M1141 749v3h5" fill="none" stroke="#fff"/><rect x="1146" y="745" width="9" height="9" fill="none" stroke="#fff"/><rect x="1146" y="745" width="7" height="9" fill="#fff"/>
<path d="M1166 758c2-8 7-13 14-14M1170 758c1-5 5-9 10-10M1174 758c1-2 3-4 5-5" fill="none" stroke="#fff"/><circle cx="1177" cy="756" r="1.300" fill="#fff"/>
<path d="M1187 746h3l4-4v13l-4-4h-3Z" fill="none" stroke="#fff"/><path d="M1196 745c2 2 2 5 0 7M1199 743c3 3 3 8 0 11M1202 741c4 4 4 11 0 15" fill="none" stroke="#fff" stroke-width=".9"/>
<text class="w" x="1213" y="744" style="font-size:12px;fill:#fff">POR</text>
<text class="w" x="1212" y="761" style="font-size:12px;fill:#fff">PTB2</text>
<text class="w" x="1264" y="743" style="font-size:12px;fill:#fff">15:35</text>
<text class="w" x="1249" y="761" style="font-size:12px;fill:#fff" textLength="58">18/06/2024</text>
<path d="M1325 741h16v12h-10l-3 3v-3h-3Z" fill="#fff"/><path d="M1328 744h10M1328 747h10M1328 750h6" stroke="#333"/>
<circle cx="1340" cy="756" r="7.500" fill="#22303c" stroke="#999"/><text class="c" x="1340" y="760" style="font-size:10px;fill:#fff">1</text>
<path d="M1361.500 728v40" stroke="#50606c"/>
</svg>
</body></html>
